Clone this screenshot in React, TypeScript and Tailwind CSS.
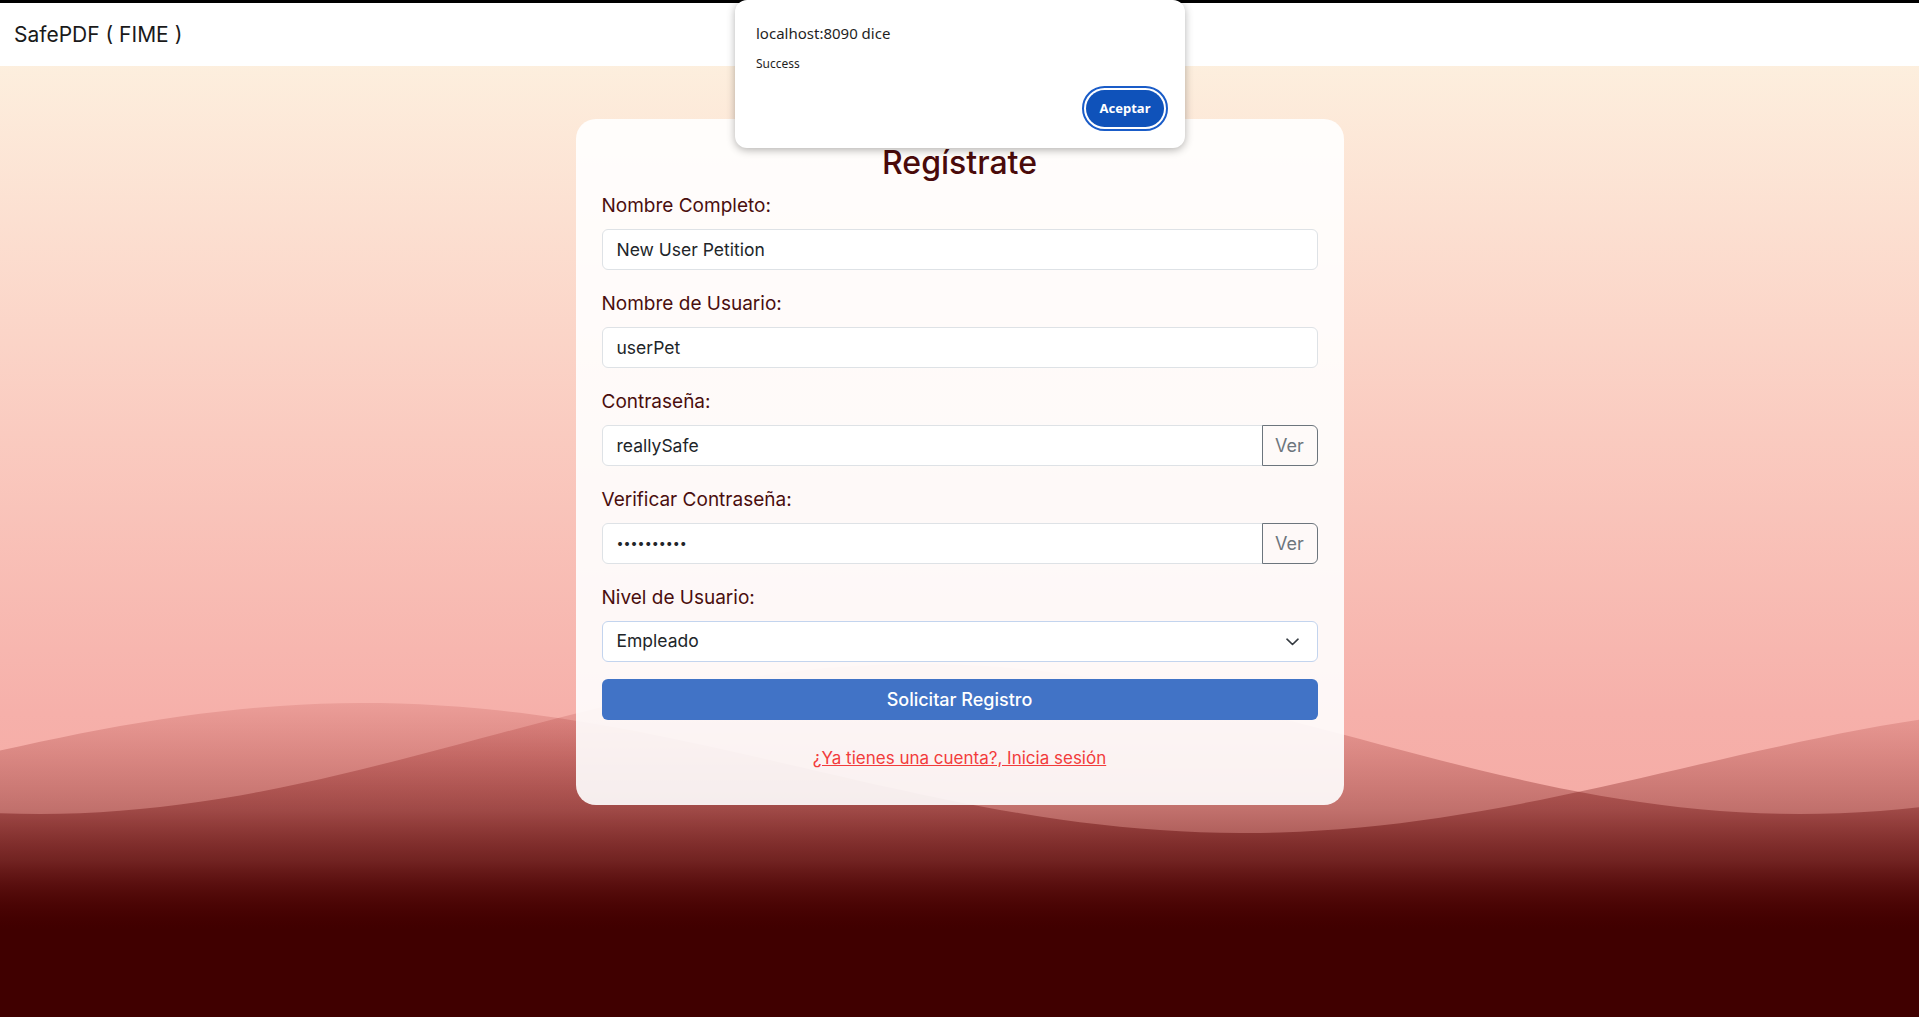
import { useState } from 'react';

// sine-ish wave helper for the background drawing
const wavePath = (fn: (x: number) => number) => {
  let d = `M0 ${fn(0).toFixed(1)}`;
  for (let x = 20; x <= 1940; x += 20) d += ` L${x} ${fn(x).toFixed(1)}`;
  return d + ' L1940 1017 L0 1017 Z';
};

const waveA = wavePath((x) => 768 - 65 * Math.cos((Math.PI * (x - 364)) / 880));
const waveB = wavePath((x) => 739 + 75 * Math.cos((Math.PI * (x - 38)) / 881));

const Waves = () => (
  <svg className="absolute inset-0 w-full h-full" viewBox="0 0 1919 1017" preserveAspectRatio="none">
    <defs>
      <linearGradient id="waveFill" gradientUnits="userSpaceOnUse" x1="0" y1="700" x2="0" y2="930">
        <stop offset="0" stopColor="#920000" stopOpacity="0.1" />
        <stop offset="0.48" stopColor="#600000" stopOpacity="0.35" />
        <stop offset="0.7" stopColor="#500000" stopOpacity="0.55" />
        <stop offset="1" stopColor="#400000" stopOpacity="1" />
      </linearGradient>
    </defs>
    <path d={waveA} fill="url(#waveFill)" />
    <path d={waveB} fill="url(#waveFill)" />
  </svg>
);

const Field = ({ label, children }: { label: string; children: React.ReactNode }) => (
  <div className="mb-[20px]">
    <label className="block text-[19px] leading-[27px] mb-[10px] text-[#4a0e0e]">{label}</label>
    {children}
  </div>
);

const inputCls =
  'w-full h-[41px] bg-white border border-[#dee2e6] rounded-[6px] px-[14px] text-[17.5px] text-[#212529] outline-none';

// password row with the "Ver" toggle button
const PasswordInput = ({ value, visible }: { value: string; visible: boolean }) => {
  const [show] = useState(visible);
  return (
    <div className="flex h-[41px]">
      <input
        readOnly
        value={show ? value : '••••••••••'}
        className={`flex-1 min-w-0 h-full bg-white border border-[#dee2e6] rounded-l-[6px] px-[14px] outline-none text-[#212529] ${
          show ? 'text-[17.5px]' : 'text-[12.5px]'
        }`}
      />
      <button className="w-[56px] h-full -ml-px border border-[#6c757d] rounded-r-[6px] text-[18px] text-[#6c757d] bg-transparent">
        Ver
      </button>
    </div>
  );
};

export default function App() {
  return (
    <div
      className="relative w-full h-screen min-h-[1017px] overflow-hidden bg-gradient-to-b from-[#fdf5e3] via-[#f6b0aa] via-70% to-[#f3a49d]"
      style={{ fontFamily: 'Inter, "Noto Sans", sans-serif' }}
    >
      <Waves />

      {/* navbar */}
      <nav className="relative z-10 border-t-[3px] border-black bg-white h-[66px] flex items-center px-[14px]">
        <span className="text-[21px] text-[#1a1a1a]">SafePDF ( FIME )</span>
      </nav>

      {/* register card */}
      <div className="relative z-10 mx-auto mt-[53px] w-[768px] rounded-[20px] bg-white/90 px-[26px] pt-[26px] pb-[33px]">
        <h1 className="text-center text-[32px] leading-[35px] font-medium text-[#4a0a0a] mb-[12px]">Regístrate</h1>

        <Field label="Nombre Completo:">
          <input readOnly value="New User Petition" className={inputCls} />
        </Field>
        <Field label="Nombre de Usuario:">
          <input readOnly value="userPet" className={inputCls} />
        </Field>
        <Field label="Contraseña:">
          <PasswordInput value="reallySafe" visible />
        </Field>
        <Field label="Verificar Contraseña:">
          <PasswordInput value="reallySafe" visible={false} />
        </Field>
        <Field label="Nivel de Usuario:">
          <div className="flex items-center justify-between h-[41px] bg-white border border-[#c3d4ee] rounded-[6px] pl-[14px] pr-[18px] text-[17.5px] text-[#212529]">
            <span>Empleado</span>
            <svg width="13" height="8" viewBox="0 0 13 8" fill="none">
              <path d="M1 1.2l5.5 5.3L12 1.2" stroke="#343a40" strokeWidth="1.6" strokeLinecap="round" strokeLinejoin="round" />
            </svg>
          </div>
        </Field>

        <button className="-mt-[3px] w-full h-[41px] rounded-[6px] bg-[#4173c6] text-white text-[18px] font-medium">
          Solicitar Registro
        </button>

        <div className="mt-[25px] text-center text-[17px] leading-[27px]">
          <a href="#" className="text-[#f23c3c] underline">
            ¿Ya tienes una cuenta?, Inicia sesión
          </a>
        </div>
      </div>

      {/* browser alert dialog */}
      <div
        className="absolute z-20 top-0 left-[735px] w-[450px] h-[148px] bg-white rounded-[12px] shadow-[0_2px_8px_rgba(0,0,0,0.3)] pl-[21px] pr-[17px] pt-[22px]"
        style={{ fontFamily: '"Noto Sans", "Open Sans", sans-serif' }}
      >
        <div className="text-[15px] leading-[22px] text-[#1f1f1f]">localhost:8090 dice</div>
        <div className="mt-[12px] text-[12px] leading-[16px] text-[#1f1f1f]">Success</div>
        <div className="flex justify-end mt-[14px]">
          <div className="rounded-full border-2 border-[#1a5cc8] p-[2px] bg-white">
            <button className="w-[78px] h-[37px] rounded-full bg-[#0f52ba] text-white text-[13px] font-bold">Aceptar</button>
          </div>
        </div>
      </div>
    </div>
  );
}
